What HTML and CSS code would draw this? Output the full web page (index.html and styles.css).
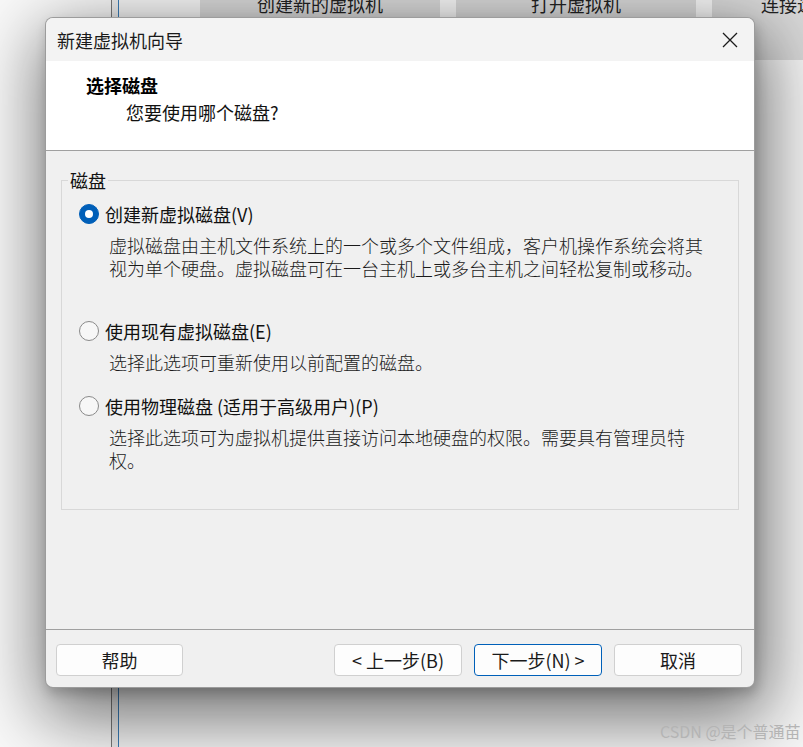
FILE: index.html
```html
<!DOCTYPE html>
<html lang="zh-CN">
<head>
<meta charset="utf-8">
<title>新建虚拟机向导</title>
<link rel="stylesheet" href="styles.css">
</head>
<body>
<div class="desktop">
  <div class="side"></div>
  <div class="rule"></div>
  <div class="main">
    <div class="tiles">
      <div class="tile">创建新的虚拟机</div>
      <div class="tile">打开虚拟机</div>
      <div class="tile">连接远程服务器</div>
    </div>
  </div>
</div>

<div class="dialog">
  <div class="titlebar">
    <span class="title">新建虚拟机向导</span>
    <svg class="close" width="16" height="16" viewBox="0 0 16 16"><path d="M1 1L15 15M15 1L1 15" stroke="#1a1a1a" stroke-width="1.3" fill="none"/></svg>
  </div>
  <div class="header">
    <div class="h-title">选择磁盘</div>
    <div class="h-sub">您要使用哪个磁盘?</div>
  </div>
  <div class="body">
    <fieldset class="group">
      <legend>磁盘</legend>
      <div class="options">
        <div class="option first"><span class="radio checked"></span><span>创建新虚拟磁盘(V)</span></div>
        <p class="desc">虚拟磁盘由主机文件系统上的一个或多个文件组成，客户机操作系统会将其视为单个硬盘。虚拟磁盘可在一台主机上或多台主机之间轻松复制或移动。</p>
        <div class="option second"><span class="radio"></span><span>使用现有虚拟磁盘(E)</span></div>
        <p class="desc">选择此选项可重新使用以前配置的磁盘。</p>
        <div class="option third"><span class="radio"></span><span>使用物理磁盘 (适用于高级用户)(P)</span></div>
        <p class="desc">选择此选项可为虚拟机提供直接访问本地硬盘的权限。需要具有管理员特权。</p>
      </div>
    </fieldset>
  </div>
  <div class="footer">
    <button class="btn help">帮助</button>
    <div class="nav">
      <button class="btn">&lt; 上一步(B)</button>
      <button class="btn primary">下一步(N) &gt;</button>
      <button class="btn">取消</button>
    </div>
  </div>
</div>

<div class="watermark">CSDN @是个普通苗</div>
</body>
</html>
```
FILE: styles.css
```css
* { box-sizing: border-box; }
html, body {
  margin: 0;
  padding: 0;
}
body {
  width: 803px;
  height: 747px;
  overflow: hidden;
  position: relative;
  font-family: "Noto Sans CJK SC", "Noto Sans", sans-serif;
  color: #000;
  background: #f6f6f6;
}

/* background application */
.desktop {
  display: flex;
  height: 747px;
}
.side {
  width: 112px;
  flex-shrink: 0;
  background: #f9f9f9;
  border-right: 1px solid #7a7a7a;
}
.rule {
  width: 7px;
  flex-shrink: 0;
  background: #efefef;
  border-right: 1px solid #3a7db8;
}
.main {
  flex: 1;
  min-width: 0;
  overflow: hidden;
  background: #f6f6f6;
  padding-left: 81px;
}
.tiles {
  display: flex;
  gap: 16px;
  margin-top: -53px;
}
.tile {
  width: 240px;
  flex-shrink: 0;
  height: 113px;
  background: #d9d9d9;
  display: flex;
  align-items: center;
  justify-content: center;
  font-size: 18px;
  color: #222;
}
.tile:last-child {
  justify-content: flex-start;
  padding-left: 49px;
}

/* dialog window */
.dialog {
  position: absolute;
  left: 45px;
  top: 17px;
  width: 710px;
  height: 671px;
  border: 1px solid rgba(0, 0, 0, 0.35);
  border-radius: 8px;
  overflow: hidden;
  background: #f0f0f0;
  box-shadow: 2px 6px 12px rgba(0, 0, 0, 0.18), 4px 22px 70px 8px rgba(0, 0, 0, 0.55);
  display: flex;
  flex-direction: column;
}
.titlebar {
  height: 43px;
  flex-shrink: 0;
  background: #f3f3f3;
  display: flex;
  align-items: center;
  justify-content: space-between;
  padding: 0 16px 0 11px;
}
.title {
  font-size: 18px;
  line-height: 24px;
  color: #1a1a1a;
}
.close { display: block; }

.header {
  height: 90px;
  flex-shrink: 0;
  background: #fff;
  border-bottom: 1px solid #a0a0a0;
  padding: 12px 0 0 40px;
}
.h-title {
  font-size: 18px;
  font-weight: 700;
  line-height: 24px;
}
.h-sub {
  font-size: 18px;
  line-height: 24px;
  margin: 3px 0 0 40px;
  color: #111;
}

.body {
  height: 478px;
  flex-shrink: 0;
  padding-top: 19px;
}
.group {
  margin: 0 15px;
  padding: 0;
  height: 340px;
  border: 1px solid #d8d8d8;
}
.group legend {
  margin-left: 6px;
  padding: 0 2px;
  font-size: 18px;
  line-height: 20px;
  color: #111;
}
.options {
  padding: 12px 0 0 17px;
}
.option {
  display: flex;
  align-items: center;
  gap: 6px;
  height: 24px;
  font-size: 18px;
  line-height: 24px;
  color: #111;
}
.option.second { margin-top: 39px; }
.option.third { margin-top: 20px; }
.radio {
  width: 20px;
  height: 20px;
  border-radius: 50%;
  border: 1px solid #8a8a8a;
  background: #f7f7f7;
  flex-shrink: 0;
  position: relative;
}
.radio.checked {
  border-color: #005fb8;
  background: #005fb8;
}
.radio.checked::after {
  content: "";
  position: absolute;
  left: 5px;
  top: 5px;
  width: 8px;
  height: 8px;
  border-radius: 50%;
  background: #fff;
}
.desc {
  margin: 8px 0 0 30px;
  max-width: 600px;
  font-size: 18px;
  line-height: 23px;
  color: #1a1a1a;
  font-weight: 300;
}

.footer {
  flex: 1;
  border-top: 1px solid #a0a0a0;
  display: flex;
  justify-content: space-between;
  align-items: flex-start;
  padding: 14px 12px 0 10px;
}
.nav {
  display: flex;
  gap: 12px;
}
.btn {
  width: 128px;
  height: 32px;
  border: 1px solid #d0d0d0;
  border-radius: 4px;
  background: #fdfdfd;
  font-family: "Noto Sans CJK SC", "Noto Sans", sans-serif;
  font-size: 18px;
  line-height: 22px;
  color: #1a1a1a;
  padding: 0;
}
.btn.help { width: 127px; }
.btn.primary {
  border-color: #0060b9;
}

.watermark {
  position: absolute;
  left: 660px;
  top: 720px;
  font-size: 16px;
  line-height: 22px;
  color: #b4b4b4;
  white-space: nowrap;
}
```
